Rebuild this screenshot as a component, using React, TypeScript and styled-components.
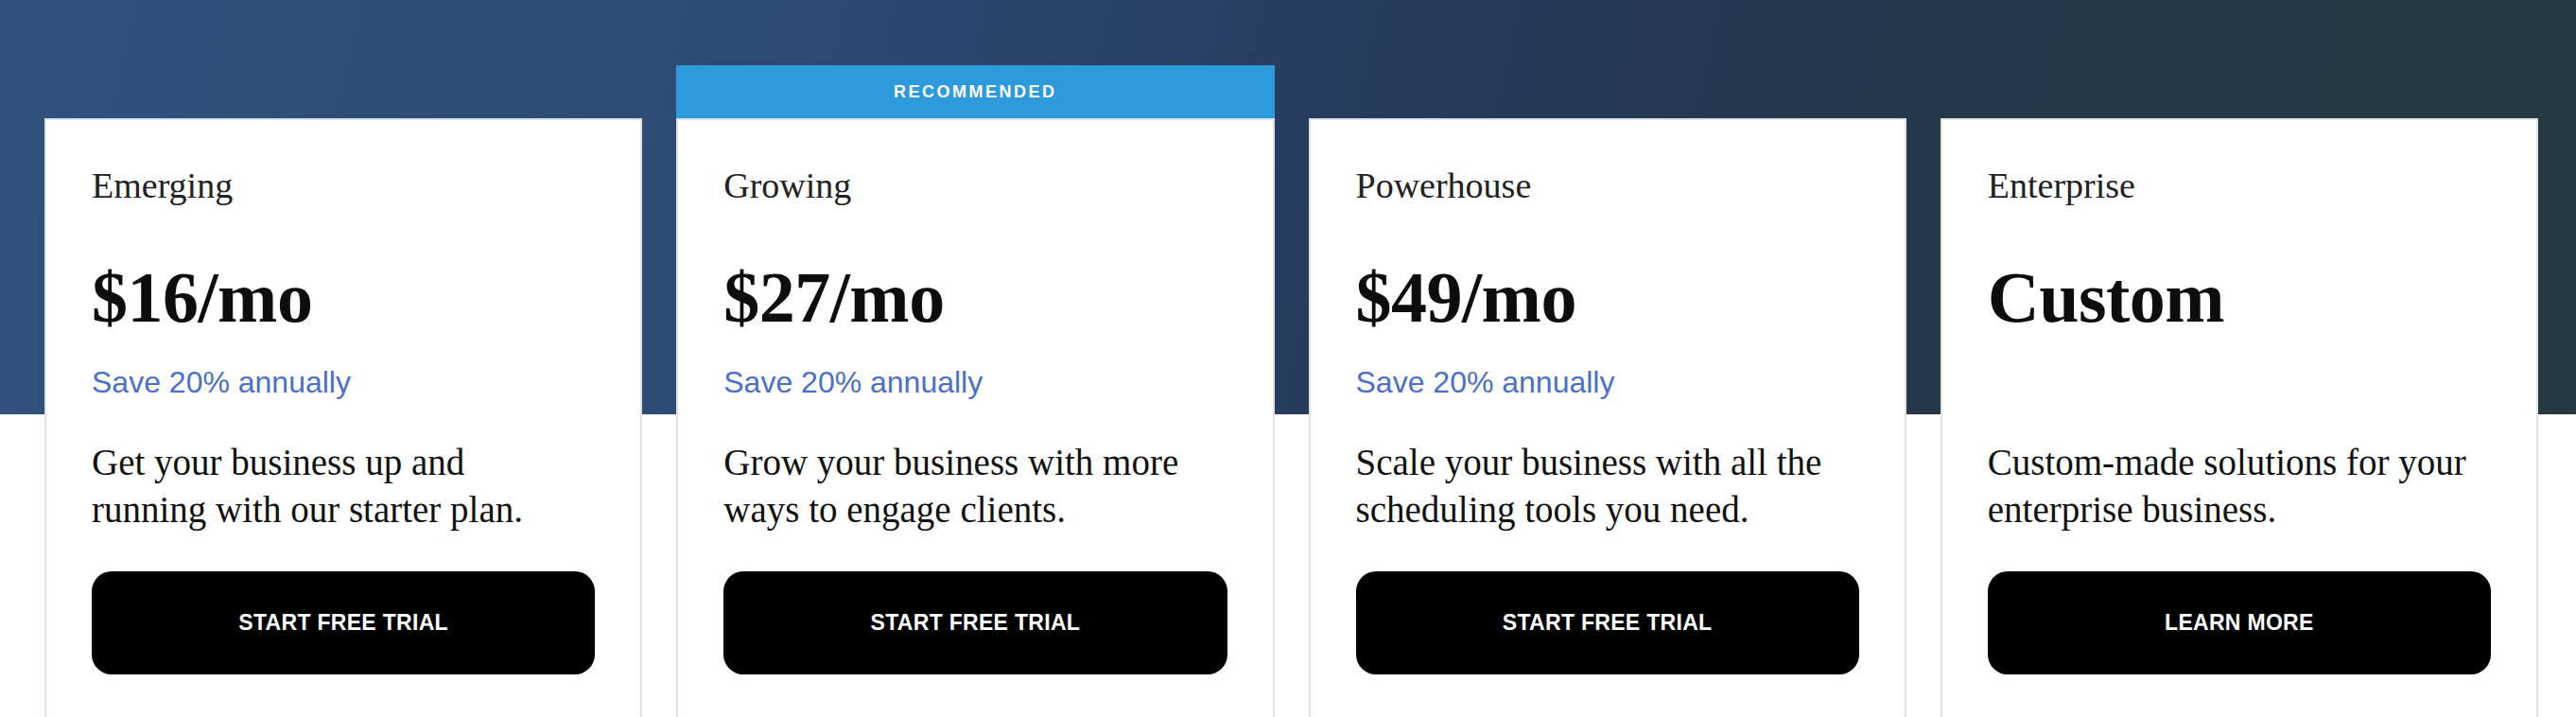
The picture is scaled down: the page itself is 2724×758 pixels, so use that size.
import styled, { createGlobalStyle } from "styled-components";

const GlobalStyle = createGlobalStyle`
  html, body {
    margin: 0;
    padding: 0;
    background: #fff;
  }
  * {
    box-sizing: border-box;
  }
`;

const Section = styled.section`
  background:
    linear-gradient(
        103deg,
        #30527c 0%,
        #2c4a74 30%,
        #263a5a 55%,
        #25364a 72%,
        #26383f 100%
      )
      top left / 100% 438px no-repeat,
    #fff;
  padding: 125px 40px 0 47px;
  height: 758px;
  overflow: hidden;
`;

const Grid = styled.div`
  display: grid;
  grid-template-columns: repeat(4, 1fr);
  gap: 36px;
  align-items: start;
`;

const Card = styled.div`
  position: relative;
  background: #fff;
  border: 2px solid #e2e2e2;
  padding: 46px 48px 60px;
  min-height: 700px;
`;

const Banner = styled.div`
  position: absolute;
  left: -2px;
  right: -2px;
  top: -58px;
  height: 56px;
  background: #2d9bdb;
  color: #fff;
  display: flex;
  align-items: center;
  justify-content: center;
  font-family: "Liberation Sans", Arial, sans-serif;
  font-weight: 600;
  font-size: 18px;
  letter-spacing: 2.5px;
`;

const PlanName = styled.div`
  font-family: "Liberation Serif", "Times New Roman", serif;
  font-size: 38px;
  line-height: 46px;
  color: #222;
`;

const Price = styled.div`
  margin-top: 57px;
  font-family: "Liberation Serif", "Times New Roman", serif;
  font-weight: 700;
  font-size: 76px;
  line-height: 76px;
  color: #0d0d0d;
  letter-spacing: -0.5px;
`;

const Saving = styled.div`
  margin-top: 32px;
  height: 40px;
  font-family: "Liberation Sans", Arial, sans-serif;
  font-size: 32px;
  line-height: 40px;
  color: #4a70c9;
`;

const Description = styled.p`
  margin: 40px 0 0;
  max-width: 520px;
  min-height: 100px;
  font-family: "Liberation Serif", "Times New Roman", serif;
  font-size: 39px;
  line-height: 50px;
  color: #111;
`;

const CtaButton = styled.button`
  display: flex;
  align-items: center;
  justify-content: center;
  width: 100%;
  height: 109px;
  margin-top: 40px;
  border: none;
  border-radius: 21px;
  background: #000;
  color: #fff;
  font-family: "Liberation Sans", Arial, sans-serif;
  font-weight: 700;
  font-size: 23px;
  letter-spacing: 0.3px;
  cursor: pointer;
`;

type Plan = {
  name: string;
  price: string;
  saving?: string;
  description: string;
  cta: string;
  recommended?: boolean;
};

const PLANS: Plan[] = [
  {
    name: "Emerging",
    price: "$16/mo",
    saving: "Save 20% annually",
    description: "Get your business up and running with our starter plan.",
    cta: "START FREE TRIAL",
  },
  {
    name: "Growing",
    price: "$27/mo",
    saving: "Save 20% annually",
    description: "Grow your business with more ways to engage clients.",
    cta: "START FREE TRIAL",
    recommended: true,
  },
  {
    name: "Powerhouse",
    price: "$49/mo",
    saving: "Save 20% annually",
    description: "Scale your business with all the scheduling tools you need.",
    cta: "START FREE TRIAL",
  },
  {
    name: "Enterprise",
    price: "Custom",
    description: "Custom-made solutions for your enterprise business.",
    cta: "LEARN MORE",
  },
];

const App = () => {
  return (
    <>
      <GlobalStyle />
      <Section>
        <Grid>
          {PLANS.map((plan) => (
            <Card key={plan.name}>
              {plan.recommended && <Banner>RECOMMENDED</Banner>}
              <PlanName>{plan.name}</PlanName>
              <Price>{plan.price}</Price>
              <Saving>{plan.saving}</Saving>
              <Description>{plan.description}</Description>
              <CtaButton>{plan.cta}</CtaButton>
            </Card>
          ))}
        </Grid>
      </Section>
    </>
  );
};

export default App;
